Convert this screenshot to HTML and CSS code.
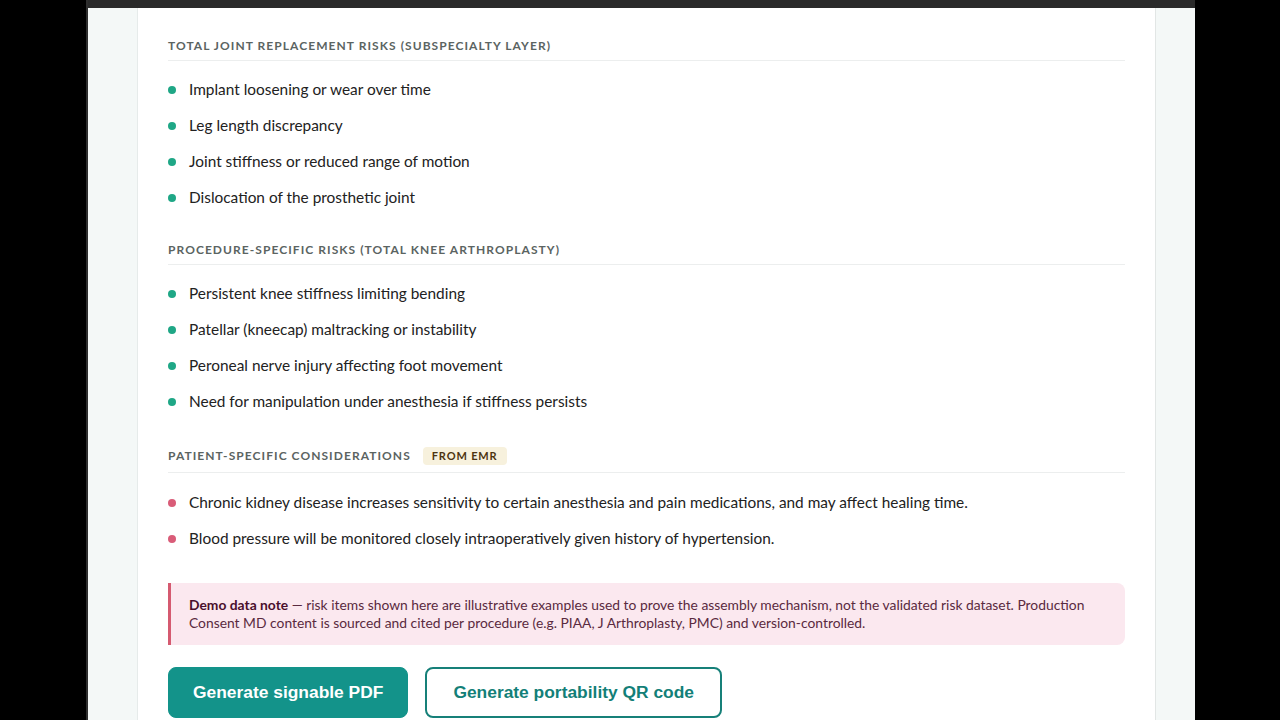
FILE: index.html
```html
<!DOCTYPE html>
<html lang="en">
<head>
<meta charset="utf-8">
<title>Consent risks</title>
<link rel="stylesheet" href="styles.css">
</head>
<body>
<div class="frame">
  <div class="topbar"></div>
  <div class="page">
    <div class="card">
      <section class="section">
        <h3 class="sec-head"><span>Total joint replacement risks (subspecialty layer)</span></h3>
        <ul class="risks">
          <li>Implant loosening or wear over time</li>
          <li>Leg length discrepancy</li>
          <li>Joint stiffness or reduced range of motion</li>
          <li>Dislocation of the prosthetic joint</li>
        </ul>
      </section>
      <section class="section">
        <h3 class="sec-head"><span>Procedure-specific risks (total knee arthroplasty)</span></h3>
        <ul class="risks">
          <li>Persistent knee stiffness limiting bending</li>
          <li>Patellar (kneecap) maltracking or instability</li>
          <li>Peroneal nerve injury affecting foot movement</li>
          <li>Need for manipulation under anesthesia if stiffness persists</li>
        </ul>
      </section>
      <section class="section section-patient">
        <h3 class="sec-head"><span>Patient-specific considerations</span><span class="badge">From EMR</span></h3>
        <ul class="risks risks-patient">
          <li>Chronic kidney disease increases sensitivity to certain anesthesia and pain medications, and may affect healing time.</li>
          <li>Blood pressure will be monitored closely intraoperatively given history of hypertension.</li>
        </ul>
      </section>
      <p class="note"><strong>Demo data note</strong> — risk items shown here are illustrative examples used to prove the assembly mechanism, not the validated risk dataset. Production Consent MD content is sourced and cited per procedure (e.g. PIAA, J Arthroplasty, PMC) and version-controlled.</p>
      <div class="actions">
        <button class="btn btn-primary" type="button">Generate signable PDF</button>
        <button class="btn btn-outline" type="button">Generate portability QR code</button>
      </div>
    </div>
  </div>
</div>
</body>
</html>
```

FILE: styles.css
```css
* { box-sizing: border-box; }
html, body { margin: 0; padding: 0; }
body {
  background: #000;
  width: 1280px;
  height: 720px;
  overflow: hidden;
  font-family: Lato, "Open Sans", "Liberation Sans", sans-serif;
}
.frame {
  margin-left: 86px;
  width: 1109px;
  height: 720px;
  border-left: 2px solid #2e2e2e;
  display: flex;
  flex-direction: column;
}
.topbar {
  height: 8px;
  background: #2a2a2a;
  flex: none;
}
.page {
  flex: 1;
  background: #f4f8f7;
  padding-left: 49px;
  padding-right: 39px;
  display: flex;
}
.card {
  flex: 1;
  background: #fff;
  border-left: 1px solid #e6ebea;
  border-right: 1px solid #e2e6e5;
  padding: 30px 30px 0 30px;
}
.section + .section { margin-top: 26px; }
.section-patient { margin-top: 27px !important; }
.sec-head {
  margin: 0;
  display: flex;
  align-items: center;
  height: 16px;
  box-sizing: content-box;
  padding-bottom: 6px;
  border-bottom: 1px solid #eceeee;
  font-size: 12px;
  font-weight: 700;
  letter-spacing: 1.06px;
  text-transform: uppercase;
  color: #5b6462;
  line-height: 16px;
}
.section-patient .sec-head { height: 18px; padding-bottom: 7px; }
.badge {
  margin-left: 12px;
  background: #f7f1dd;
  color: #4d3410;
  font-size: 11px;
  letter-spacing: 0.85px;
  line-height: 18px;
  padding: 0 9px;
  border-radius: 4px;
}
.risks {
  list-style: none;
  margin: 11px 0 0 0;
  padding: 0;
}
.risks-patient { margin-top: 12px; }
.risks li {
  position: relative;
  padding: 7px 0 9px 21px;
  font-size: 15.4px;
  line-height: 20px;
  color: #222;
}
.risks li::before {
  content: "";
  position: absolute;
  left: 0;
  top: 14px;
  width: 8px;
  height: 8px;
  border-radius: 50%;
  background: #1fa786;
}
.risks-patient li::before { background: #d95c78; }
.note {
  margin: 26px 0 0 0;
  background: #fbe8ef;
  border-left: 3px solid #d55a70;
  border-radius: 0 8px 8px 0;
  padding: 13px 30px 13px 18px;
  font-size: 13.85px;
  line-height: 18px;
  color: #5a2a40;
}
.note strong { color: #4a0f2c; font-weight: 700; }
.actions {
  margin-top: 22px;
  display: flex;
  gap: 17px;
}
.btn {
  height: 51px;
  border-radius: 8px;
  font-family: "Liberation Sans", Arial, sans-serif;
  font-weight: 700;
  font-size: 17.4px;
  padding: 0 24px;
  cursor: pointer;
}
.btn-primary {
  background: #13938a;
  color: #fff;
  border: 1px solid #13938a;
}
.btn-outline {
  background: #fff;
  color: #137f78;
  border: 2px solid #168079;
  padding: 0 26px;
}
```
